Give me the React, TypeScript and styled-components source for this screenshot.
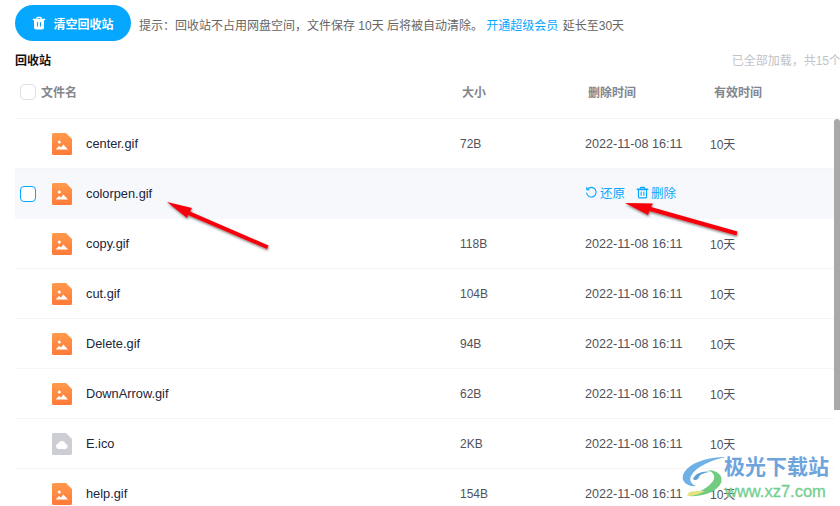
import React from "react";
import styled, { createGlobalStyle } from "styled-components";

const Global = createGlobalStyle`
  html, body { margin: 0; padding: 0; background: #fff; }
  body { width: 840px; height: 506px; overflow: hidden; font-family: "Liberation Sans", "Noto Sans CJK SC", sans-serif; }
  * { box-sizing: border-box; }
`;
const Page = styled.div`position: relative; width: 840px; height: 506px; overflow: hidden;`;
const Toolbar = styled.div`display: flex; align-items: center; height: 36px; margin-top: 5px; padding-left: 15px;`;
const ClearButton = styled.div`
  display: flex; align-items: center; justify-content: center; gap: 7px; width: 116px; height: 36px; border-radius: 18px;
  background: #06a7ff; color: #fff; font-size: 12px; font-weight: 700;
`;
const Hint = styled.div`margin-left: 8px; font-size: 12px; color: #666; white-space: pre; margin-top: 2px;`;
const Link = styled.span`color: #06a7ff; margin-right: 1px;`;
const TitleRow = styled.div`display: flex; justify-content: space-between; align-items: center; height: 20px; margin-top: 8px; padding-left: 15px;`;
const Title = styled.div`font-size: 12px; font-weight: 700; color: #111;`;
const Loaded = styled.div`font-size: 12px; color: #c2c2c8; white-space: nowrap; margin-right: -1px;`;
const HeaderRow = styled.div`
  display: grid; grid-template-columns: 21px 421px 126px 126px 1fr; align-items: center; height: 50px; margin: 0 0 0 15px;
  padding-left: 5px; padding-bottom: 4px; border-bottom: 1px solid #f5f5f6; font-size: 12px; font-weight: 700; color: #84868d;
`;
const HeaderBox = styled.span`width: 16px; height: 16px; border: 1px solid #dcdfe6; border-radius: 4px;`;
const List = styled.div`margin-left: 15px; width: 819px;`;
const Row = styled.div<{ $active?: boolean }>`
  display: grid; grid-template-columns: 16px 16px 20px 14px 374px 125px 125px 1fr; align-items: center; height: 50px; padding-left: 5px;
  background: ${p => (p.$active ? "#f7f8fc" : "#fff")};
  border-bottom: 1px solid ${p => (p.$active ? "#f7f8fc" : "#f5f5f6")};
  font-size: 12px; color: #50525b;
`;
const RowBox = styled.span`width: 16px; height: 16px; border: 1px solid #06a7ff; border-radius: 4px; background: #fff;`;
const Name = styled.span`grid-column: 5; color: #22243a; font-size: 12.8px;`;
const Size = styled.span`grid-column: 6;`;
const Time = styled.span`grid-column: 7; font-size: 12.6px;`;
const Valid = styled.span`grid-column: 8;`;
const Actions = styled.span`grid-column: 7 / span 2; display: flex; align-items: center; color: #06a7ff; font-size: 12.5px; margin-top: -2px;`;
const Action = styled.span`display: inline-flex; align-items: center; gap: 2px; margin-right: 11px;`;
const IconCell = styled.span`grid-column: 3; display: flex; height: 22px;`;
const Scrollbar = styled.div`position: absolute; right: 0; top: 119px; width: 6px; height: 291px; background: #a9a9a9; border-radius: 3px 3px 0 0;`;
const Arrows = styled.svg`position: absolute; inset: 0; pointer-events: none;`;
const Watermark = styled.div`position: absolute; left: 680px; top: 450px; width: 160px; height: 56px; pointer-events: none;`;
const MarkLogo = styled.svg`position: absolute; left: 0; top: 0;`;
const MarkTitle = styled.div`position: absolute; left: 44px; top: 3px; font-size: 21px; font-weight: 700; color: #6ea4dc; white-space: nowrap; line-height: 28px;`;
const MarkUrl = styled.div`position: absolute; left: 45px; top: 31px; font-size: 16.5px; font-weight: 400; color: #72cf8e; -webkit-text-stroke: .3px #72cf8e; white-space: nowrap; line-height: 20px;`;

const TrashIcon = ({ size = 14, color = "#fff", fill = false }: { size?: number; color?: string; fill?: boolean }) => (
  <svg width={size} height={size} viewBox="0 0 16 16" fill="none">
    <path d="M5.500 3.500V2.600c0-.6.4-1 1-1h3c.6 0 1 .4 1 1v.9" stroke={color} strokeWidth="1.500" />
    <path d="M1.500 4h13" stroke={color} strokeWidth="1.600" strokeLinecap="round" />
    <path d="M3 4.500h10V13c0 1-.7 1.600-1.600 1.600H4.600C3.700 14.600 3 14 3 13V4.500z" stroke={color} strokeWidth="1.400" fill={fill ? color : "none"} />
    <path d="M6.300 7.500v4M9.700 7.500v4" stroke={fill ? "#06a7ff" : color} strokeWidth="1.300" strokeLinecap="round" />
  </svg>
);
const RestoreIcon = () => (
  <svg width="13" height="13" viewBox="0 0 13 13" fill="none">
    <path d="M2.600 3.200A4.800 4.800 0 1 1 1.600 7" stroke="#06a7ff" strokeWidth="1.100" strokeLinecap="round" />
    <path d="M1.800 1v2.700h2.800" stroke="#06a7ff" strokeWidth="1.100" />
  </svg>
);
const FileIcon = ({ kind }: { kind: "image" | "cloud" }) => (
  <svg width="20" height="22" viewBox="0 0 20 22">
    <defs>
      <linearGradient id="fileOrange" x1="0" y1="0" x2="0" y2="1">
        <stop offset="0" stopColor="#ff9a4d" />
        <stop offset="1" stopColor="#ff7a38" />
      </linearGradient>
    </defs>
    <path d="M1.500 0H14l6 6v14.500a1.500 1.500 0 0 1-1.500 1.500h-17A1.500 1.500 0 0 1 0 20.500v-19A1.500 1.500 0 0 1 1.500 0z" fill={kind === "image" ? "url(#fileOrange)" : "#cdced4"} />
    {kind === "image" ? (
      <>
        <circle cx="7.300" cy="9" r="1.500" fill="#fff" />
        <path d="M3.500 16.500l3.500-3.600 2 1.600 2.300-3 4.800 5z" fill="#fff" />
      </>
    ) : (
      <path d="M6.500 16a2.800 2.800 0 0 1-.4-5.500 4 4 0 0 1 7.600.6 2.500 2.500 0 0 1-.2 4.900z" fill="#fff" />
    )}
  </svg>
);

const files = [
  { name: "center.gif", size: "72B" },
  { name: "colorpen.gif", size: "", active: true },
  { name: "copy.gif", size: "118B" },
  { name: "cut.gif", size: "104B" },
  { name: "Delete.gif", size: "94B" },
  { name: "DownArrow.gif", size: "62B" },
  { name: "E.ico", size: "2KB", cloud: true },
  { name: "help.gif", size: "154B" },
];

export default function App() {
  return (
    <Page>
      <Global />
      <Toolbar>
        <ClearButton><TrashIcon fill />清空回收站</ClearButton>
        <Hint>提示：回收站不占用网盘空间，文件保存 10天 后将被自动清除。 <Link>开通超级会员</Link> 延长至30天</Hint>
      </Toolbar>
      <TitleRow>
        <Title>回收站</Title>
        <Loaded>已全部加载，共15个</Loaded>
      </TitleRow>
      <HeaderRow>
        <HeaderBox />
        <span>文件名</span>
        <span>大小</span>
        <span>删除时间</span>
        <span>有效时间</span>
      </HeaderRow>
      <List>
        {files.map(f => (
          <Row key={f.name} $active={f.active}>
            {f.active && <RowBox />}
            <IconCell><FileIcon kind={f.cloud ? "cloud" : "image"} /></IconCell>
            <Name>{f.name}</Name>
            {f.active ? (
              <Actions>
                <Action><RestoreIcon />还原</Action>
                <Action><TrashIcon size={13} color="#06a7ff" />删除</Action>
              </Actions>
            ) : (
              <>
                <Size>{f.size}</Size>
                <Time>2022-11-08 16:11</Time>
                <Valid>10天</Valid>
              </>
            )}
          </Row>
        ))}
      </List>
      <Scrollbar />
      <Arrows width="840" height="506" viewBox="0 0 840 506">
        <defs>
          <filter id="arrowShadow" x="-20%" y="-20%" width="140%" height="150%">
            <feDropShadow dx="0.500" dy="1.500" stdDeviation="1.200" floodColor="#000" floodOpacity=".5" />
          </filter>
        </defs>
        <g filter="url(#arrowShadow)" fill="#f60008">
          <path d="M167 202L192 208L190 211.500L268.500 245.500L267 249L188 215L187 218Z" />
          <path d="M625 203L653 203.500L651 207L737.500 231.500L736.500 235.500L649.500 211L648 215Z" />
        </g>
      </Arrows>
      <Watermark>
        <MarkLogo width="48" height="52" viewBox="0 0 48 52" fill="none">
          <path d="M46 7C30 7 8 12 3 25C1 32 8 37 16 36C11 34 9 30 11 26C16 16 32 10 46 7z" fill="#6fb0e6" />
          <path d="M8 46C22 47 37 42 41 33C44 25 36 20 28 20C33 22 36 26 33 31C28 38 18 43 8 46z" fill="#72cc80" />
          <path d="M7 46C14 46 20 44 25 41C18 41 12 41 9 42z" fill="#e3e27e" />
          <path d="M13 29C15 23 24 20 32 22C26 22 20 24 19 27C18 30 15 31 13 29z" fill="#5f9fd6" />
        </MarkLogo>
        <MarkTitle>极光下载站</MarkTitle>
        <MarkUrl>www.xz7.com</MarkUrl>
      </Watermark>
    </Page>
  );
}
